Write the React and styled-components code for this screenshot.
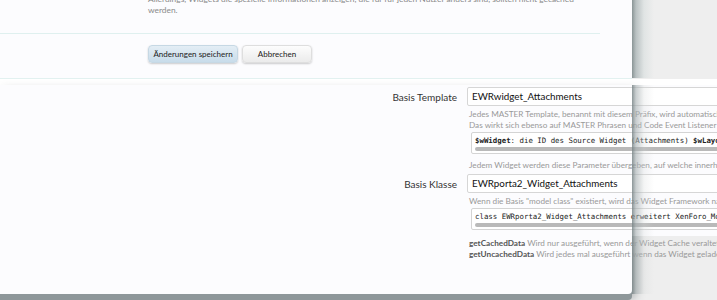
import React from 'react'
import styled, { createGlobalStyle } from 'styled-components'

const Global = createGlobalStyle`
  html, body {
    margin: 0;
    padding: 0;
    background: #eeeeee;
  }
  body {
    font-family: 'Lato', 'Open Sans', sans-serif;
  }
`

const Page = styled.div`
  width: 717px;
  height: 300px;
  overflow: hidden;
  background: #eeeeee;
  display: flex;
  flex-direction: column;
`

const TopPanel = styled.div`
  position: relative;
  width: 632px;
  height: 79px;
  background: #fcfcfe;
  border-bottom: 1px solid #e2f1f0;
  box-sizing: border-box;
  &::after {
    content: '';
    position: absolute;
    top: 0;
    bottom: 0;
    right: -22px;
    width: 22px;
    background: linear-gradient(to right, #8a9596 0, #b9c1c2 4px, #e0e4e4 12px, #eeeeee 22px);
  }
`

const HelpTail = styled.p`
  margin: -6px 0 0 148px;
  width: 440px;
  font-size: 8.4px;
  line-height: 11px;
  color: #8a8a8a;
`

const Divider = styled.div`
  margin-top: ${p => p.$top}px;
  width: ${p => p.$width}px;
  height: 1px;
  background: #dff0ef;
`

const ButtonRow = styled.div`
  display: flex;
  gap: 4px;
  padding: 11px 0 0 148px;
`

const Button = styled.button`
  height: 18px;
  width: ${p => p.$width}px;
  padding: 0;
  border: 1px solid ${p => (p.$primary ? '#c6d8e4' : '#dedede')};
  border-radius: 4px;
  font-family: 'Lato', sans-serif;
  font-size: 8px;
  color: #222;
  background: ${p =>
    p.$primary
      ? 'linear-gradient(to bottom, #e4eef5, #c8dcea)'
      : 'linear-gradient(to bottom, #fdfdfd, #ebebeb)'};
  box-shadow: 0 1px 2px rgba(0, 0, 0, 0.2);
`

const Gap = styled.div`
  width: 100%;
  height: 6px;
  background: #ffffff;
`

const LowerPanel = styled.div`
  position: relative;
  width: 632px;
  height: 209px;
  background: #fcfcfe;
  border-bottom-right-radius: 4px;
  box-shadow: 0 6px 0 #8e979a, 4px 5px 10px rgba(60, 70, 72, 0.35);
  &::after {
    content: '';
    position: absolute;
    top: 0;
    bottom: 0;
    right: -22px;
    width: 22px;
    z-index: 2;
    background: linear-gradient(to right, rgba(120, 132, 134, 0.85) 0, rgba(165, 174, 176, 0.6) 4px, rgba(210, 214, 214, 0.25) 12px, rgba(238, 238, 238, 0) 22px);
  }
`

const Fields = styled.div`
  width: 760px;
  background: #fcfcfe;
  padding-top: 1px;
  padding-bottom: 6px;
`

const Row = styled.div`
  display: grid;
  grid-template-columns: 457px 1fr;
  column-gap: 10px;
  margin-top: ${p => p.$top || 0}px;
`

const Label = styled.label`
  text-align: right;
  font-size: 10px;
  line-height: 20px;
  color: #333;
`

const Field = styled.div`
  display: flex;
  flex-direction: column;
`

const Input = styled.div`
  height: 19px;
  box-sizing: border-box;
  padding-left: 4px;
  border: 1px solid #d6d6d6;
  border-radius: 2px;
  background: #fff;
  font-size: 9.8px;
  line-height: 17px;
  color: #111;
`

const Hint = styled.div`
  margin: ${p => p.$top || 3}px 0 0 2px;
  font-size: 8.2px;
  line-height: 11px;
  color: #999;
  white-space: nowrap;
`

const Code = styled.div`
  margin: 1px 0 0 4px;
  height: 22px;
  box-sizing: border-box;
  border: 1px solid #d4d4d4;
  border-radius: 2px;
  background: #fff;
  padding: 3px 0 0 3px;
  font-family: 'DejaVu Sans Mono', 'Liberation Mono', monospace;
  font-size: 7.4px;
  line-height: 9px;
  color: #222;
  white-space: nowrap;
  display: flex;
  flex-direction: column;
  gap: 2px;
`

const Scrollbar = styled.div`
  height: 4px;
  margin-right: 4px;
  border-radius: 3px;
  background: #b9b9b9;
`

const Methods = styled.div`
  padding: 2px 0 0 469px;
  font-size: 8.2px;
  line-height: 11px;
  color: #999;
  white-space: nowrap;
  position: relative;
  z-index: 1;
`

const Method = styled.b`
  color: #555;
`

export default function App() {
  return (
    <Page>
      <Global />
      <TopPanel>
        <HelpTail>
          Allerdings, Widgets die spezielle Informationen anzeigen, die für für jeden Nutzer anders sind, sollten nicht gecached
          werden.
        </HelpTail>
        <Divider $top={17} $width={600} />
        <ButtonRow>
          <Button $primary $width={90}>Änderungen speichern</Button>
          <Button $width={70}>Abbrechen</Button>
        </ButtonRow>
      </TopPanel>
      <Gap />
      <LowerPanel>
        <Fields>
          <Row $top={1}>
            <Label>Basis Template</Label>
            <Field>
              <Input>EWRwidget_Attachments</Input>
              <Hint>Jedes MASTER Template, benannt mit diesem Präfix, wird automatisch<br />
                Das wirkt sich ebenso auf MASTER Phrasen und Code Event Listener aus</Hint>
              <Code>
                <span><b>$wWidget</b>: die ID des Source Widget (Attachments) <b>$wLayout</b></span>
                <Scrollbar />
              </Code>
              <Hint $top={6}>Jedem Widget werden diese Parameter übergeben, auf welche innerhalb</Hint>
            </Field>
          </Row>
          <Row $top={3}>
            <Label>Basis Klasse</Label>
            <Field>
              <Input>EWRporta2_Widget_Attachments</Input>
              <Hint>Wenn die Basis "model class" existiert, wird das Widget Framework nach</Hint>
              <Code>
                <span>class EWRporta2_Widget_Attachments erweitert XenForo_Model</span>
                <Scrollbar />
              </Code>
            </Field>
          </Row>
        </Fields>
        <Methods>
          <Method>getCachedData</Method> Wird nur ausgeführt, wenn der Widget Cache veraltet ist<br />
          <Method>getUncachedData</Method> Wird jedes mal ausgeführt wenn das Widget geladen wird
        </Methods>
      </LowerPanel>
    </Page>
  )
}
